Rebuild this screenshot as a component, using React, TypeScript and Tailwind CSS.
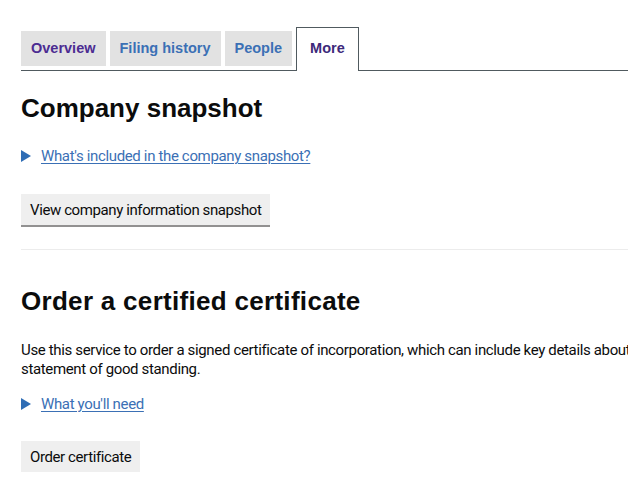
import React from 'react';

const tabs = [
  { label: 'Overview', color: 'text-[#4c2c92]' },
  { label: 'Filing history', color: 'text-[#3b70b5]' },
  { label: 'People', color: 'text-[#3b70b5]' },
];

const Summary = ({ text }: { text: string }) => (
  <div className="flex items-center gap-[10px] text-[15px] leading-5 tracking-[-0.35px]">
    <span className="block h-0 w-0 border-y-[6px] border-l-[10px] border-y-transparent border-l-[#2f6db5]" />
    <a href="#" className="text-[#3b70b5] underline underline-offset-2 decoration-1">
      {text}
    </a>
  </div>
);

const Button = ({ children }: { children: React.ReactNode }) => (
  <button className="bg-[#efefef] px-[9px] pt-[6px] pb-[5px] text-[15px] leading-5 tracking-[-0.4px] text-[#0b0c0c] shadow-[0_2px_0_#929191]">
    {children}
  </button>
);

export default function App() {
  return (
    <div className="w-full overflow-hidden bg-white">
      <div className="w-[720px] pl-[21px] pt-[27px] font-['Roboto',sans-serif] text-[#0b0c0c]">
        {/* tabs */}
        <div className="flex items-end gap-[4px] border-b border-[#505a5f] font-['Liberation_Sans',Arial,sans-serif] text-[14.5px] font-bold">
          {tabs.map((t) => (
            <a key={t.label} href="#" className={`mb-[4px] flex h-[35px] items-center bg-[#e2e2e2] px-[10px] ${t.color}`}>
              {t.label}
            </a>
          ))}
          <a href="#" className="-mb-px flex h-[44px] items-center border border-b-0 border-[#505a5f] bg-white px-[13px] pb-[2px] text-[#3d2a7a]">
            More
          </a>
        </div>

        <div className="pr-[92px]">
          <h2 className="mt-[21px] font-['Liberation_Sans',Arial,sans-serif] text-[26px] font-bold leading-8">
            Company snapshot
          </h2>
          <div className="mt-[22px]">
            <Summary text="What's included in the company snapshot?" />
          </div>
          <div className="mt-[28px]">
            <Button>View company information snapshot</Button>
          </div>

          <hr className="mt-[24px] border-t border-[#ececec]" />

          <h2 className="mt-[35px] font-['Liberation_Sans',Arial,sans-serif] text-[26px] font-bold leading-8 tracking-[0.3px]">
            Order a certified certificate
          </h2>
          <p className="mt-[24px] text-[15px] leading-[19px] tracking-[-0.35px]">
            <span className="whitespace-nowrap">
              Use this service to order a signed certificate of incorporation, which can include key details about the company, or a
            </span>
            <br />
            statement of good standing.
          </p>
          <div className="mt-[15px]">
            <Summary text="What you'll need" />
          </div>
          <div className="mt-[27px]">
            <Button>Order certificate</Button>
          </div>
        </div>
      </div>
    </div>
  );
}
